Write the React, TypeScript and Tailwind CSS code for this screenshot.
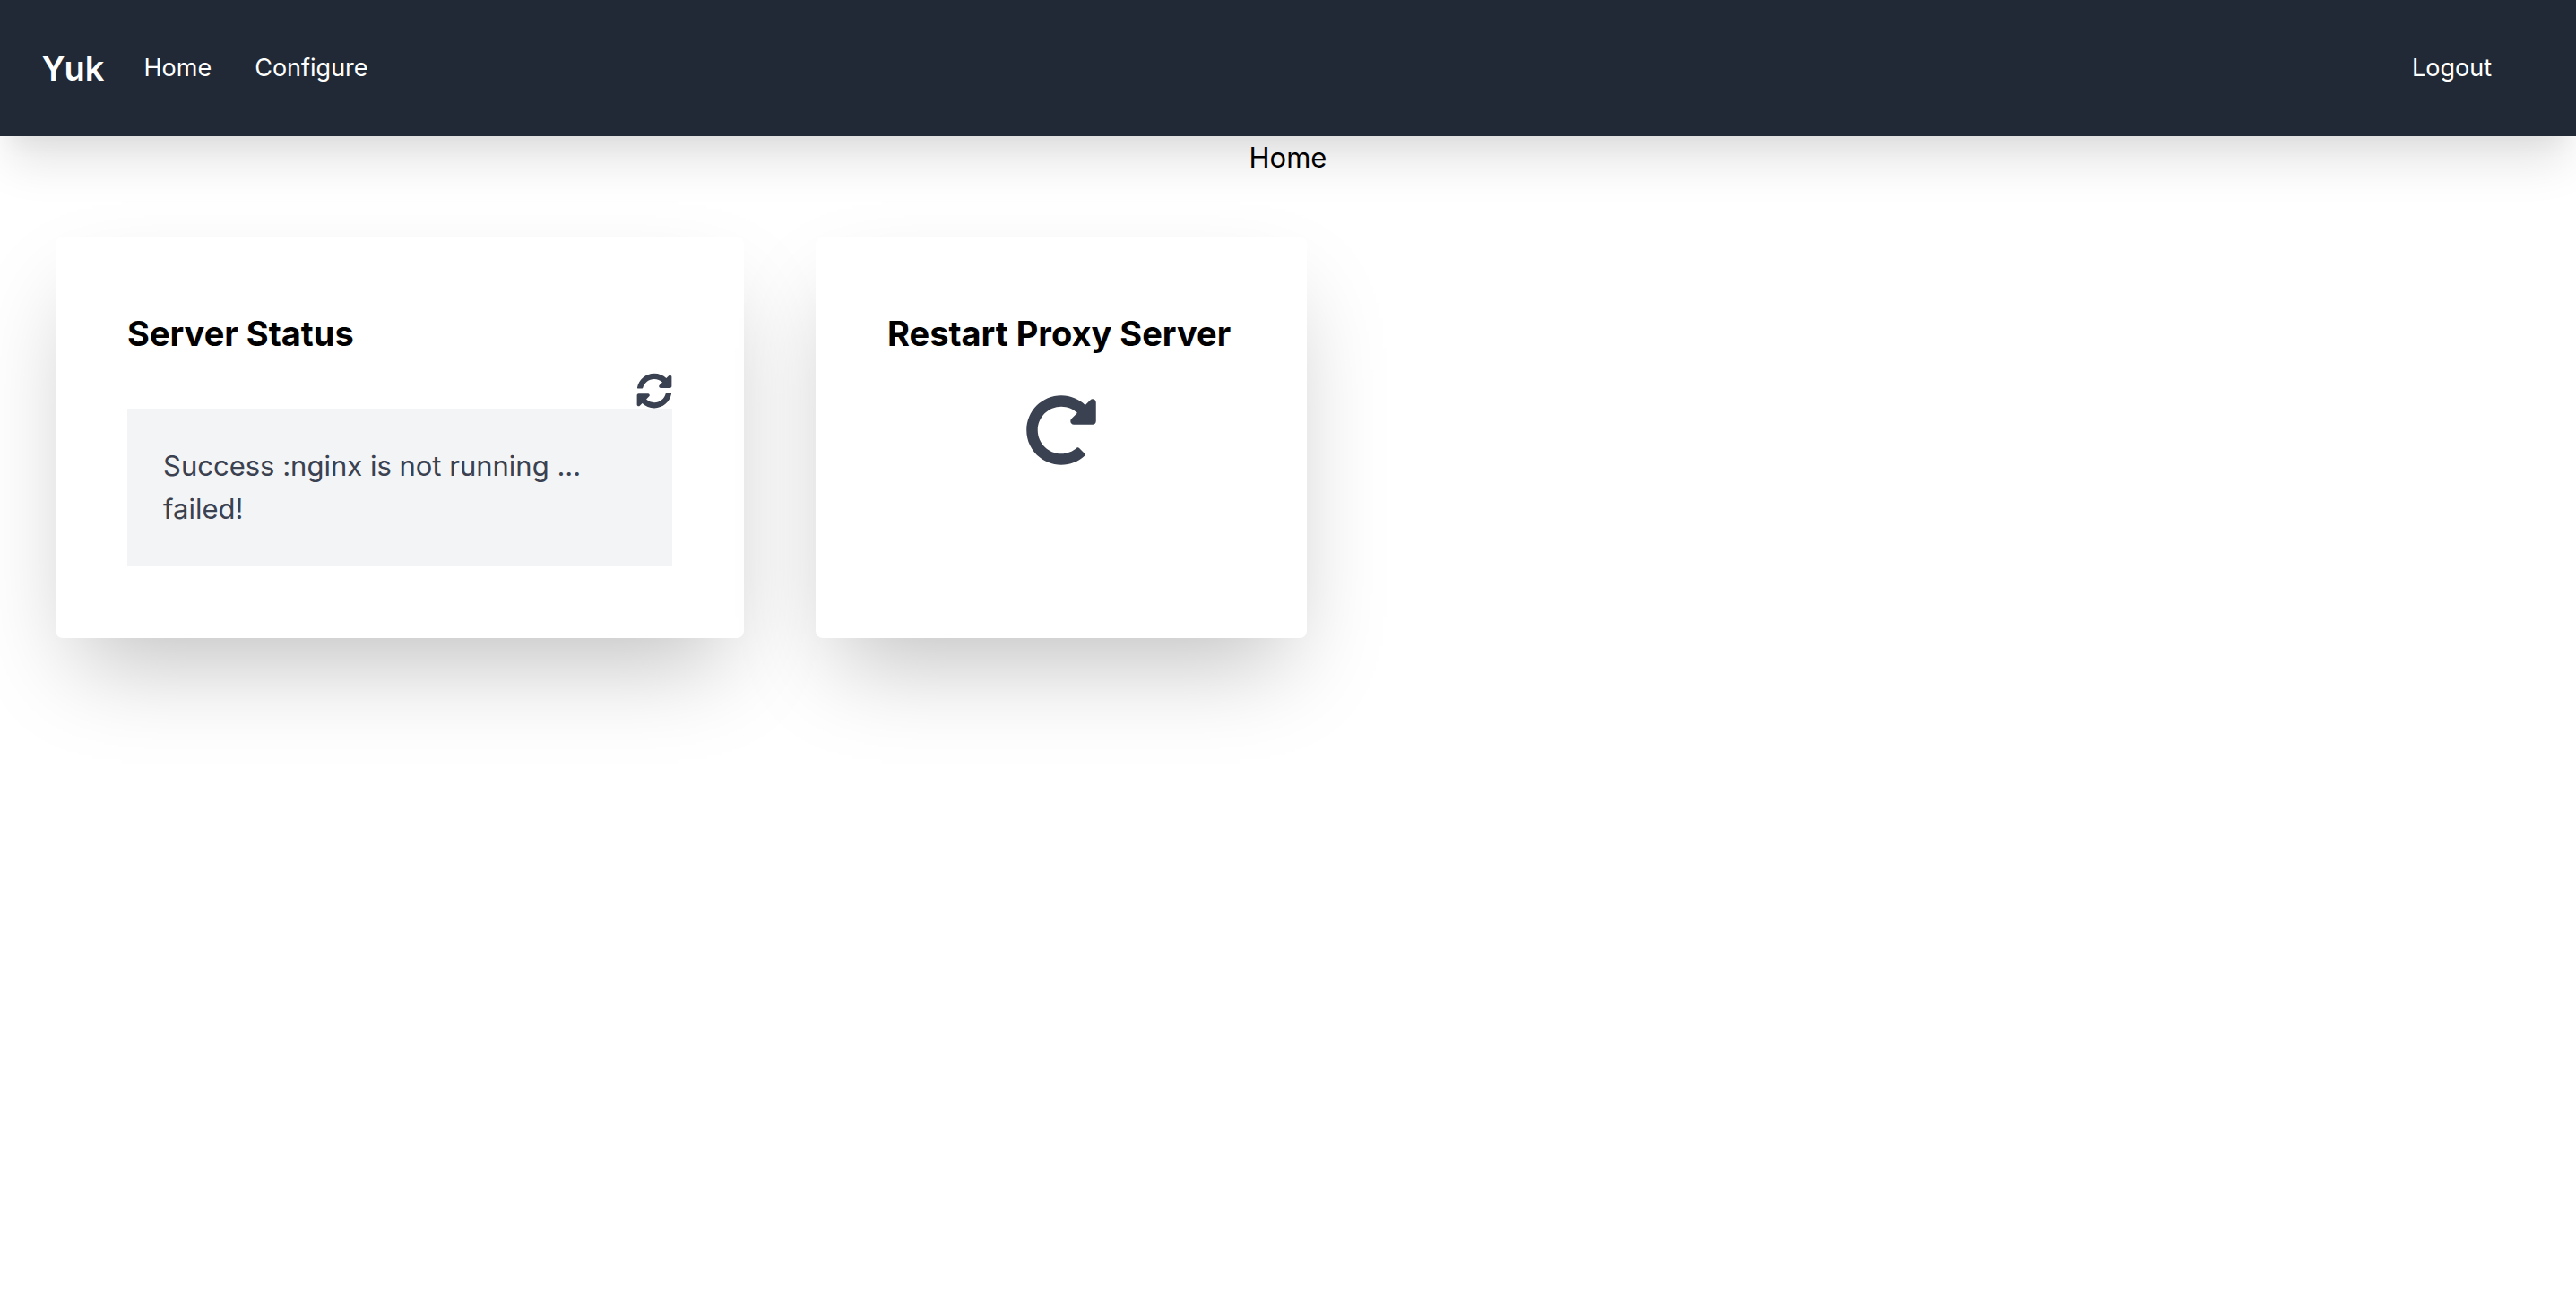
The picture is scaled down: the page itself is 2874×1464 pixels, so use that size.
import type { ReactNode } from "react";
import { FaRedoAlt, FaSyncAlt } from "react-icons/fa";

function NavLink({ children }: { children: ReactNode }) {
  return (
    <a href="#" className="mr-12 text-[27px] leading-10 text-white">
      {children}
    </a>
  );
}

function Card({ title, width, children }: { title: string; width: string; children: ReactNode }) {
  return (
    <section
      className={`${width} rounded-lg bg-white p-20 shadow-[0_50px_100px_-24px_rgba(0,0,0,0.25)]`}
    >
      <h2 className="text-[38px] leading-14 font-bold text-black">{title}</h2>
      {children}
    </section>
  );
}

export default function App() {
  return (
    <div className="min-h-screen bg-white font-['Inter',sans-serif] text-[31px] leading-12 text-black">
      <nav className="flex items-center bg-[#222936] px-[46px] py-12 shadow-[0_40px_50px_-10px_rgba(0,0,0,0.1),0_20px_20px_-10px_rgba(0,0,0,0.04)]">
        <span className="mr-11 text-[38px] leading-14 font-semibold text-white">Yuk</span>
        <div className="flex flex-1 items-center">
          <NavLink>Home</NavLink>
          <NavLink>Configure</NavLink>
        </div>
        <NavLink>Logout</NavLink>
      </nav>
      <h1 className="text-center">Home</h1>
      <main className="flex flex-wrap gap-20 px-[62px] pt-16">
        <Card title="Server Status" width="w-3xl">
          <div className="mt-4 flex justify-end">
            <button type="button" aria-label="Refresh status" className="text-[#3a4150]">
              <FaSyncAlt className="size-10" />
            </button>
          </div>
          <p className="bg-[#f2f4f6] py-10 pr-20 pl-10 text-[#3a4150]">
            Success :nginx is not running ... failed!
          </p>
        </Card>
        <Card title="Restart Proxy Server" width="min-w-[548px]">
          <div className="mt-10 flex justify-center">
            <button type="button" aria-label="Restart proxy server" className="text-[#3a4150]">
              <FaRedoAlt className="size-20" />
            </button>
          </div>
        </Card>
      </main>
    </div>
  );
}
